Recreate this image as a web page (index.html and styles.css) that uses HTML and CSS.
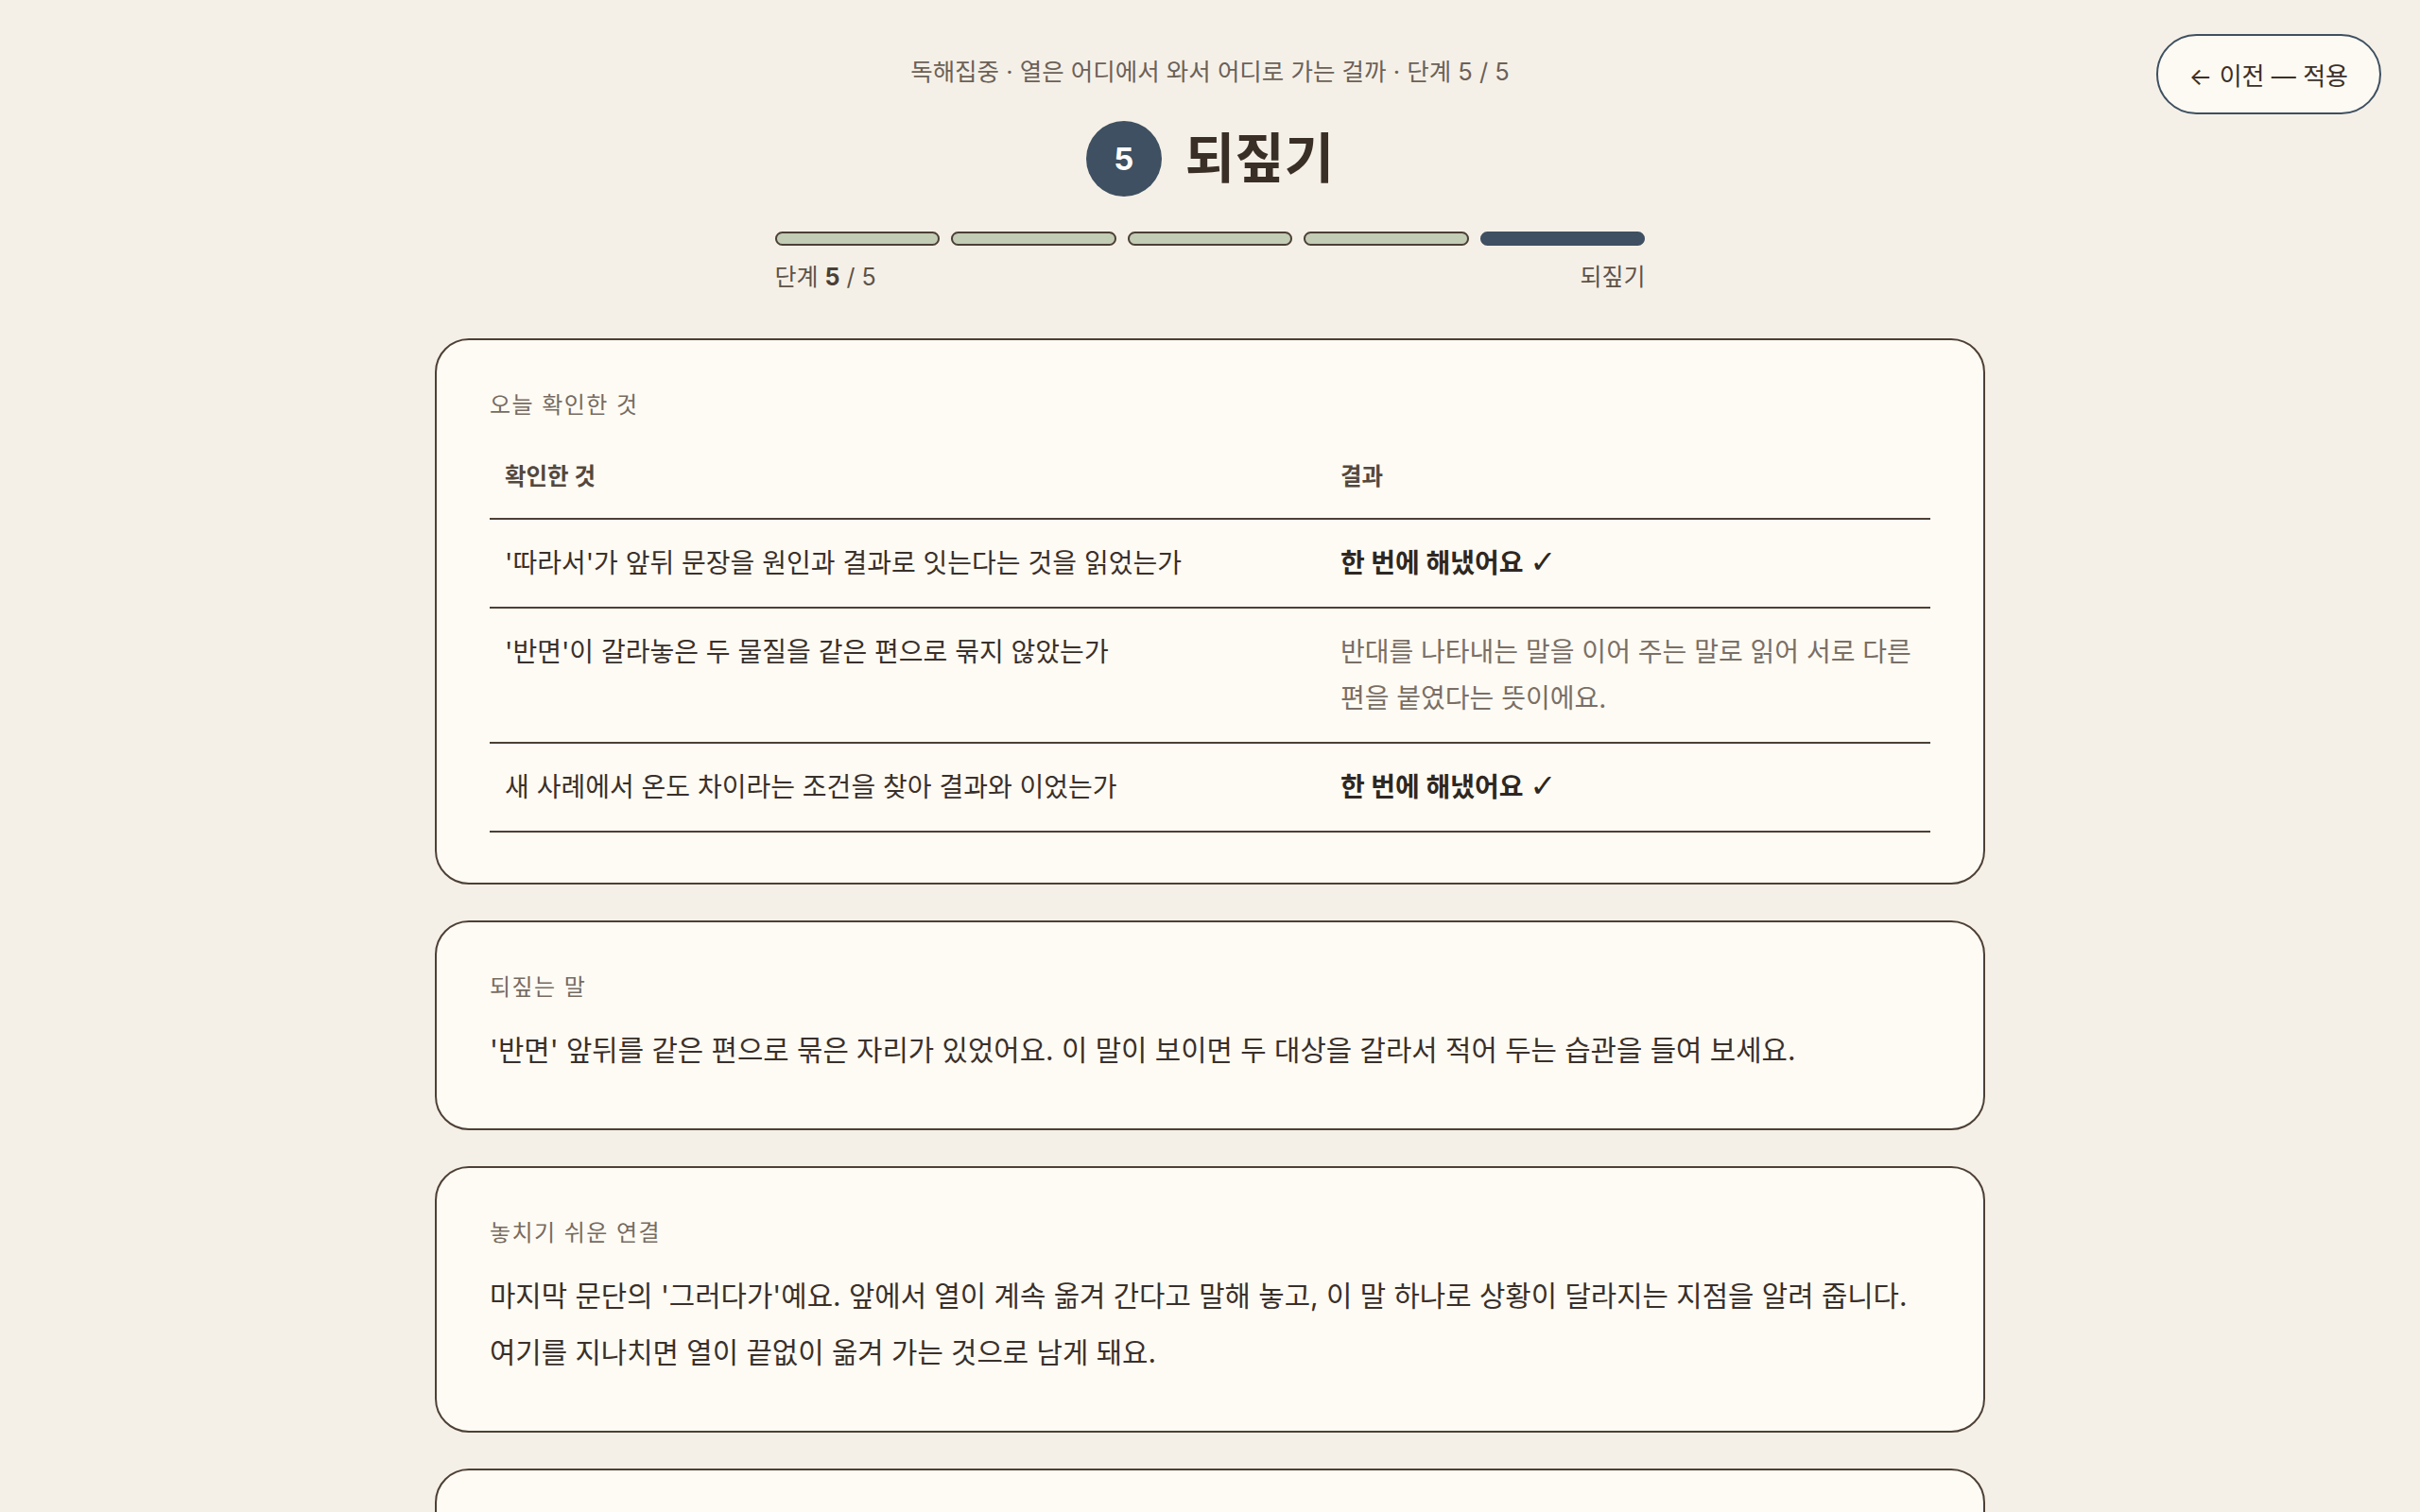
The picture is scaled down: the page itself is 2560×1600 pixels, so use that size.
FILE: index.html
```html
<!DOCTYPE html>
<html lang="ko">
<head>
    <meta charset="UTF-8">
    <meta name="viewport" content="width=device-width, initial-scale=1.0">
    <title>되짚기 — 독해집중</title>
    <link rel="stylesheet" href="styles.css">
</head>
<body>
    <header class="topbar">
        <div class="spacer"></div>
        <div class="heading">
            <p class="crumb">독해집중 · 열은 어디에서 와서 어디로 가는 걸까 · 단계 5 / 5</p>
            <h1 class="title"><span class="step-badge">5</span>되짚기</h1>
            <div class="progress">
                <span class="seg done"></span>
                <span class="seg done"></span>
                <span class="seg done"></span>
                <span class="seg done"></span>
                <span class="seg current"></span>
            </div>
            <div class="progress-meta">
                <span>단계 <b>5</b> / 5</span>
                <span>되짚기</span>
            </div>
        </div>
        <div class="nav">
            <button class="back-btn">← 이전 — 적용</button>
        </div>
    </header>

    <main class="cards">
        <section class="card">
            <h2 class="card-label">오늘 확인한 것</h2>
            <table class="check-table">
                <thead>
                    <tr>
                        <th class="col-what">확인한 것</th>
                        <th>결과</th>
                    </tr>
                </thead>
                <tbody>
                    <tr>
                        <td>'따라서'가 앞뒤 문장을 원인과 결과로 잇는다는 것을 읽었는가</td>
                        <td class="ok">한 번에 해냈어요 <span class="tick">✓</span></td>
                    </tr>
                    <tr>
                        <td>'반면'이 갈라놓은 두 물질을 같은 편으로 묶지 않았는가</td>
                        <td class="note">반대를 나타내는 말을 이어 주는 말로 읽어 서로 다른 편을 붙였다는 뜻이에요.</td>
                    </tr>
                    <tr>
                        <td>새 사례에서 온도 차이라는 조건을 찾아 결과와 이었는가</td>
                        <td class="ok">한 번에 해냈어요 <span class="tick">✓</span></td>
                    </tr>
                </tbody>
            </table>
        </section>

        <section class="card">
            <h2 class="card-label">되짚는 말</h2>
            <p class="card-text">'반면' 앞뒤를 같은 편으로 묶은 자리가 있었어요. 이 말이 보이면 두 대상을 갈라서 적어 두는 습관을 들여 보세요.</p>
        </section>

        <section class="card">
            <h2 class="card-label">놓치기 쉬운 연결</h2>
            <p class="card-text">마지막 문단의 '그러다가'예요. 앞에서 열이 계속 옮겨 간다고 말해 놓고, 이 말 하나로 상황이 달라지는 지점을 알려 줍니다. 여기를 지나치면 열이 끝없이 옮겨 가는 것으로 남게 돼요.</p>
        </section>

        <section class="card">
            <h2 class="card-label">다음에 읽을 때</h2>
            <p class="card-text">이어 주는 말을 만나면 앞뒤가 같은 편인지 다른 편인지 먼저 적어 보세요.</p>
        </section>
    </main>
</body>
</html>
```

FILE: styles.css
```css
* {
    box-sizing: border-box;
}
body {
    margin: 0;
    background-color: #f5f0e7;
    color: #3a302a;
    font-family: Inter, "Noto Sans CJK KR", sans-serif;
    word-break: keep-all;
}
.topbar {
    display: grid;
    grid-template-columns: 1fr 921px 1fr;
    padding: 36px 41px 0;
}
.heading {
    display: flex;
    flex-direction: column;
    align-items: center;
    padding-top: 22px;
}
.crumb {
    margin: 0;
    font-size: 25.5px;
    line-height: 36px;
    color: #6b6158;
}
.title {
    display: flex;
    align-items: center;
    gap: 25px;
    margin: 34px 0 0;
    height: 80px;
    font-size: 57px;
    font-weight: 700;
    line-height: 80px;
    color: #3a2f27;
}
.step-badge {
    display: flex;
    align-items: center;
    justify-content: center;
    width: 80px;
    height: 80px;
    border-radius: 50%;
    background-color: #3e5061;
    color: #ffffff;
    font-size: 33px;
    font-weight: 700;
}
.progress {
    display: flex;
    gap: 12px;
    width: 100%;
    margin-top: 37px;
}
.seg {
    flex: 1;
    height: 15px;
    border: 2px solid #4d4036;
    border-radius: 999px;
    background-color: #c3ccb4;
}
.seg.current {
    background-color: #3e5061;
    border-color: #3e5061;
}
.progress-meta {
    display: flex;
    justify-content: space-between;
    width: 100%;
    margin-top: 16px;
    font-size: 25px;
    line-height: 34px;
    color: #5e5349;
}
.progress-meta b {
    font-weight: 700;
    color: #4a3f36;
}
.nav {
    display: flex;
    justify-content: flex-end;
    align-items: flex-start;
}
.back-btn {
    display: flex;
    align-items: center;
    height: 85px;
    padding: 0 33px;
    border: 2.5px solid #3e5061;
    border-radius: 999px;
    background-color: #fdfaf3;
    color: #3a302a;
    font-family: inherit;
    font-size: 26px;
    cursor: pointer;
}
.cards {
    display: flex;
    flex-direction: column;
    gap: 38px;
    width: 1640px;
    margin: 48px auto 0;
    padding-bottom: 60px;
}
.card {
    padding: 53px 56px;
    border: 2px solid #4d4036;
    border-radius: 36px;
    background-color: #fefbf4;
}
.card-label {
    margin: 0 0 20px;
    font-size: 24px;
    font-weight: 400;
    line-height: 32px;
    letter-spacing: 0.06em;
    color: #766b61;
}
.card-text {
    margin: 0;
    font-size: 29.75px;
    line-height: 60px;
    color: #3a302a;
}
.check-table {
    width: 100%;
    border-collapse: collapse;
    margin-top: -4px;
}
.check-table th,
.check-table td {
    padding: 21.5px 16px;
    border-bottom: 2px solid #4d4036;
    text-align: left;
    vertical-align: top;
}
.check-table th {
    padding: 22px 16px 23px;
    font-size: 24.5px;
    font-weight: 700;
    line-height: 42px;
    color: #54483e;
}
.check-table .col-what {
    width: 58%;
}
.check-table td {
    font-size: 28px;
    line-height: 49px;
    color: #3a302a;
}
.check-table td.ok {
    font-weight: 700;
    color: #2e2722;
}
.check-table td.note {
    color: #7a6f65;
}
.tick {
    font-family: "DejaVu Sans", sans-serif;
    font-size: 1.2em;
    font-weight: 700;
    line-height: 1;
}
```
